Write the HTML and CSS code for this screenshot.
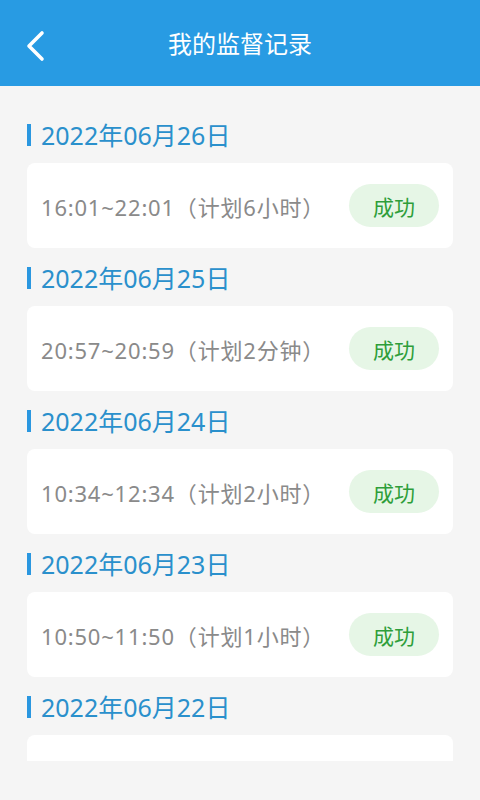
FILE: index.html
```html
<!DOCTYPE html>
<html lang="zh-CN">
<head>
<meta charset="UTF-8">
<title>我的监督记录</title>
<link rel="stylesheet" href="styles.css">
</head>
<body>
<!-- 顶部栏 -->
<div class="topbar">
    <a class="back" href="#">
        <svg width="22" height="32" viewBox="0 0 22 32">
            <path d="M17 3 L4 16 L17 29" fill="none" stroke="#fff" stroke-width="3.6" stroke-linecap="round" stroke-linejoin="round"/>
        </svg>
    </a>
    <div class="title">我的监督记录</div>
</div>

<!-- 记录列表 -->
<div class="list">
    <div class="date">2022年06月26日</div>
    <div class="card">
        <span class="time">16:01~22:01（计划6小时）</span>
        <span class="badge">成功</span>
    </div>

    <div class="date">2022年06月25日</div>
    <div class="card">
        <span class="time">20:57~20:59（计划2分钟）</span>
        <span class="badge">成功</span>
    </div>

    <div class="date">2022年06月24日</div>
    <div class="card">
        <span class="time">10:34~12:34（计划2小时）</span>
        <span class="badge">成功</span>
    </div>

    <div class="date">2022年06月23日</div>
    <div class="card">
        <span class="time">10:50~11:50（计划1小时）</span>
        <span class="badge">成功</span>
    </div>

    <div class="date">2022年06月22日</div>
    <div class="card"></div>
</div>
</body>
</html>
```

FILE: styles.css
```css
body {
    margin: 0;
    background-color: #f5f5f5;
    font-family: "Noto Sans", "Noto Sans CJK SC", sans-serif;
}

.topbar {
    height: 86px;
    background-color: #289be3;
    display: flex;
    align-items: center;
    justify-content: center;
    position: relative;
}

.back {
    position: absolute;
    left: 25px;
    top: 30px;
    display: block;
    width: 22px;
    height: 32px;
}

.back svg {
    display: block;
}

.title {
    color: #fff;
    font-size: 24px;
    margin-top: -2px;
}

.list {
    height: 656px;
    overflow: hidden;
    padding: 19px 27px 0;
}

.date {
    height: 58px;
    box-sizing: border-box;
    padding: 15px 0 0 14px;
    position: relative;
    font-size: 25px;
    line-height: 30px;
    color: #2a90cc;
}

.date::before {
    content: "";
    position: absolute;
    left: 0;
    top: 19px;
    width: 4px;
    height: 22px;
    background-color: #2a97e0;
}

.card {
    height: 85px;
    background: white;
    border-radius: 8px;
    display: flex;
    align-items: center;
    justify-content: space-between;
    padding: 0 14px;
}

.time {
    font-size: 22px;
    letter-spacing: 0.8px;
    color: #8a8a8a;
}

.badge {
    width: 90px;
    height: 43px;
    border-radius: 22px;
    background-color: #e6f6e6;
    color: #2e9e3a;
    font-size: 21px;
    display: flex;
    align-items: center;
    justify-content: center;
}
```
